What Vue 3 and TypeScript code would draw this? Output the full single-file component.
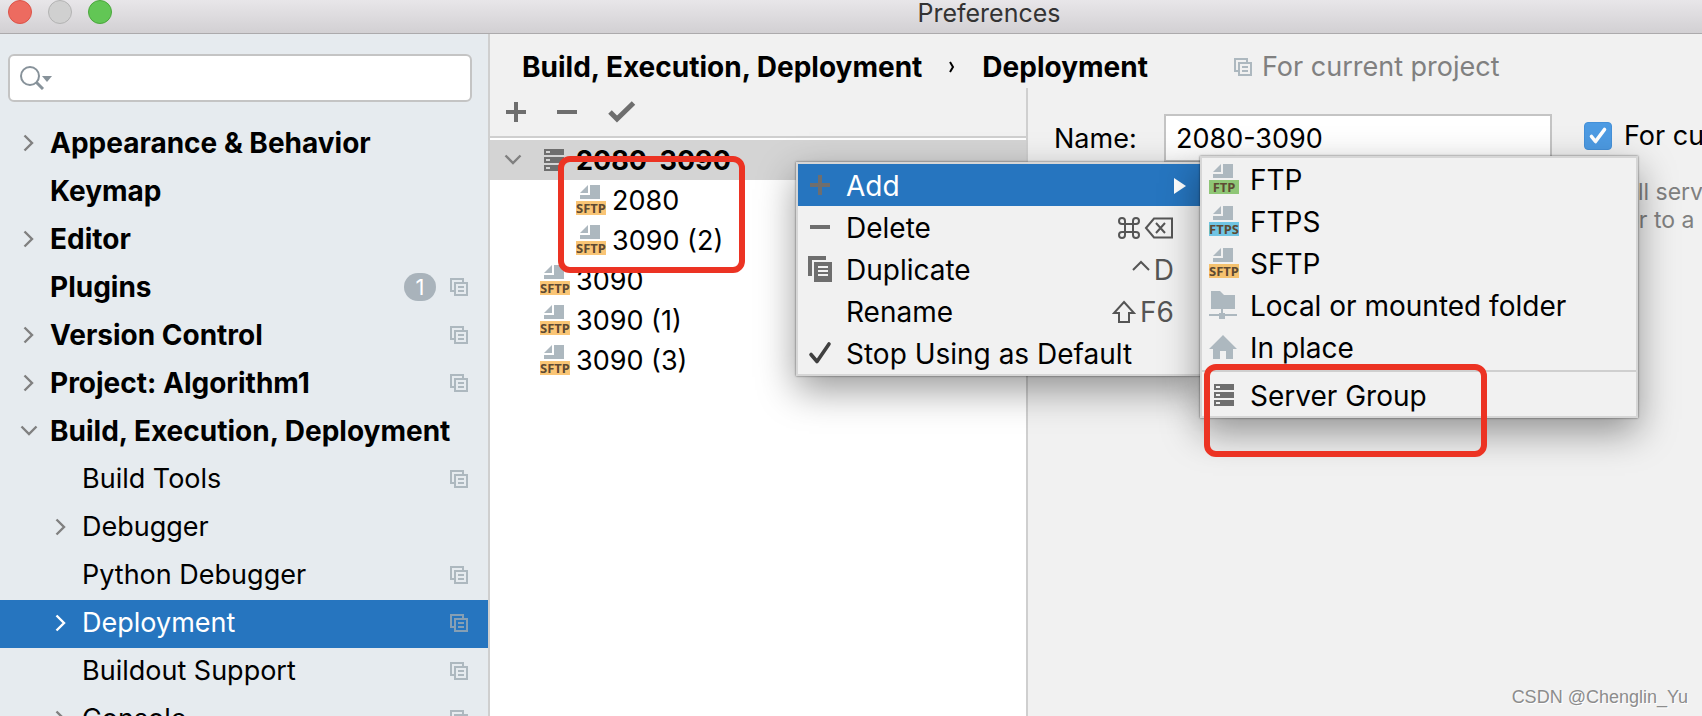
<script setup lang="ts">
import { ref } from 'vue'

interface NavItem {
  label: string
  level: 1 | 2
  arrow?: 'right' | 'down'
  badge?: string
  project?: boolean
  active?: boolean
}

interface ServerItem {
  label: string
  kind: 'group' | 'sftp'
  nested?: boolean
}

interface MenuItem {
  label: string
  icon?: 'plus' | 'minus' | 'copy' | 'tick'
  keys?: string
  keyIcons?: ('cmd' | 'erase' | 'ctrl' | 'shift')[]
  active?: boolean
}

const navItems: NavItem[] = [
  { label: 'Appearance & Behavior', level: 1, arrow: 'right' },
  { label: 'Keymap', level: 1 },
  { label: 'Editor', level: 1, arrow: 'right' },
  { label: 'Plugins', level: 1, badge: '1', project: true },
  { label: 'Version Control', level: 1, arrow: 'right', project: true },
  { label: 'Project: Algorithm1', level: 1, arrow: 'right', project: true },
  { label: 'Build, Execution, Deployment', level: 1, arrow: 'down' },
  { label: 'Build Tools', level: 2, project: true },
  { label: 'Debugger', level: 2, arrow: 'right' },
  { label: 'Python Debugger', level: 2, project: true },
  { label: 'Deployment', level: 2, arrow: 'right', project: true, active: true },
  { label: 'Buildout Support', level: 2, project: true },
  { label: 'Console', level: 2, arrow: 'right', project: true },
]

const servers: ServerItem[] = [
  { label: '2080-3090', kind: 'group' },
  { label: '2080', kind: 'sftp', nested: true },
  { label: '3090 (2)', kind: 'sftp', nested: true },
  { label: '3090', kind: 'sftp' },
  { label: '3090 (1)', kind: 'sftp' },
  { label: '3090 (3)', kind: 'sftp' },
]

const menuItems: MenuItem[] = [
  { label: 'Add', icon: 'plus', active: true },
  { label: 'Delete', icon: 'minus', keyIcons: ['cmd', 'erase'] },
  { label: 'Duplicate', icon: 'copy', keyIcons: ['ctrl'], keys: 'D' },
  { label: 'Rename', keyIcons: ['shift'], keys: 'F6' },
  { label: 'Stop Using as Default', icon: 'tick' },
]

const protocols = [
  { label: 'FTP', color: '#8fc676' },
  { label: 'FTPS', color: '#70c4e3' },
  { label: 'SFTP', color: '#f5c26f' },
]

const search = ref('')
const serverName = ref('2080-3090')
const currentOnly = ref(true)
</script>

<template>
  <div class="window">
    <svg class="defs" aria-hidden="true">
      <symbol id="project" viewBox="0 0 18 18">
        <path d="M1 13V1h12v3M1 12v1h3" fill="none" stroke="currentColor" stroke-width="2" />
        <path d="M5 5h12v12H5zM8 9h6M8 13h6" fill="none" stroke="currentColor" stroke-width="2" />
      </symbol>
      <symbol id="arrow" viewBox="0 0 12 18">
        <path d="M1.5 1.500l7.500 7.500-7.500 7.500" fill="none" stroke="currentColor" stroke-width="2.400" />
      </symbol>
      <symbol id="group" viewBox="0 0 20 22">
        <path
          fill="currentColor"
          fill-rule="evenodd"
          d="M0 0h20v6H0zM2 2v2h4V2zM0 8h20v6H0zM2 10v2h4v-2zM0 16h20v6H0zM2 18v2h4v-2z"
        />
      </symbol>
      <symbol id="plus" viewBox="0 0 20 20">
        <path fill="currentColor" d="M8 0h4v8h8v4h-8v8H8v-8H0V8h8z" />
      </symbol>
      <symbol id="minus" viewBox="0 0 20 20">
        <path fill="currentColor" d="M0 8h20v4H0z" />
      </symbol>
    </svg>

    <header class="titlebar">
      <div class="lights">
        <button type="button" class="light red" aria-label="Close"></button>
        <button type="button" class="light grey" aria-label="Minimize"></button>
        <button type="button" class="light green" aria-label="Zoom"></button>
      </div>
      <h1>Preferences</h1>
    </header>

    <div class="body">
      <aside class="sidebar">
        <label class="search">
          <svg width="32" height="24" viewBox="0 0 32 24" aria-hidden="true">
            <circle cx="10" cy="10" r="9" fill="none" stroke="#87929a" stroke-width="2" />
            <path d="M16 16l7 7" stroke="#87929a" stroke-width="3" />
            <path d="M22 10h10l-5 6z" fill="#87929a" />
          </svg>
          <input v-model="search" type="text" aria-label="Search settings" />
        </label>
        <nav>
          <a
            v-for="item in navItems"
            :key="item.label"
            href="#"
            class="nav-row"
            :class="{ deep: item.level === 2, active: item.active }"
          >
            <span class="twisty">
              <svg v-if="item.arrow" :class="item.arrow" width="12" height="18" aria-hidden="true"><use href="#arrow" /></svg>
            </span>
            <span class="nav-label">{{ item.label }}</span>
            <span v-if="item.badge" class="badge">{{ item.badge }}</span>
            <svg v-if="item.project" class="project" width="18" height="18" aria-hidden="true"><use href="#project" /></svg>
          </a>
        </nav>
      </aside>

      <main class="content">
        <div class="crumbs">
          <span>Build, Execution, Deployment</span>
          <svg width="8" height="12" viewBox="0 0 8 12" aria-hidden="true">
            <path d="M2 1l3 5-3 5" fill="none" stroke="#000" stroke-width="2" />
          </svg>
          <span>Deployment</span>
          <span class="scope">
            <svg class="project" width="18" height="18" aria-hidden="true"><use href="#project" /></svg>
            For current project
          </span>
        </div>

        <div class="panes">
          <section class="list-pane">
            <div class="toolbar">
              <button type="button" aria-label="Add server"><svg width="20" height="20"><use href="#plus" /></svg></button>
              <button type="button" aria-label="Remove server"><svg width="20" height="20"><use href="#minus" /></svg></button>
              <button type="button" aria-label="Use as default">
                <svg width="28" height="22" viewBox="0 0 28 22">
                  <path d="M2 11l7 7L25.500 2" fill="none" stroke="currentColor" stroke-width="5" />
                </svg>
              </button>
            </div>
            <ul class="servers">
              <li
                v-for="server in servers"
                :key="server.label"
                :class="[server.kind, { nested: server.nested }]"
              >
                <template v-if="server.kind === 'group'">
                  <svg class="down" width="12" height="18" aria-hidden="true"><use href="#arrow" /></svg>
                  <svg class="group-icon" width="20" height="22" aria-hidden="true"><use href="#group" /></svg>
                </template>
                <svg v-else width="30" height="30" viewBox="0 0 30 30">
                  <path d="M4 8l8-8v8zM14 0h10v14H4v-4h10z" fill="#adb8bf" />
                  <path d="M0 16h30v14H0z" fill="#f9c575" />
                  <text class="tag" x="15" y="28">SFTP</text>
                </svg>
                <span class="server-label">{{ server.label }}</span>
              </li>
            </ul>
          </section>

          <section class="form-pane">
            <div class="name-row">
              <label for="server-name">Name:</label>
              <input id="server-name" v-model="serverName" type="text" />
              <label class="check">
                <span class="box">
                  <input v-model="currentOnly" type="checkbox" />
                  <svg width="28" height="28" viewBox="0 0 28 28" aria-hidden="true">
                    <path d="M7.500 14.500l4 5 9-12" fill="none" stroke="#fff" stroke-width="3.600" stroke-linecap="round" stroke-linejoin="round" />
                  </svg>
                </span>
                For current project
              </label>
            </div>
            <p class="hint">all servers<br />or to a</p>
          </section>
        </div>
      </main>
    </div>

    <div class="menu context" role="menu">
      <button
        v-for="item in menuItems"
        :key="item.label"
        type="button"
        role="menuitem"
        class="menu-row"
        :class="{ active: item.active }"
      >
        <span class="menu-icon">
          <svg v-if="item.icon === 'plus'" width="20" height="20"><use href="#plus" /></svg>
          <svg v-else-if="item.icon === 'minus'" width="20" height="20"><use href="#minus" /></svg>
          <svg v-else-if="item.icon === 'copy'" width="24" height="26" viewBox="0 0 24 26">
            <path fill="currentColor" fill-rule="evenodd" d="M0 0h18v4H4v16H0zM6 6h18v20H6zM10 10v2h10v-2zM10 14v2h10v-2zM10 18v2h10v-2z" />
          </svg>
          <svg v-else-if="item.icon === 'tick'" width="24" height="24" viewBox="0 0 24 24">
            <path d="M3 13.500l6 7L21 3" fill="none" stroke="#404040" stroke-width="3.600" stroke-linecap="round" stroke-linejoin="round" />
          </svg>
        </span>
        <span class="menu-label">{{ item.label }}</span>
        <svg v-if="item.active" width="12" height="16" viewBox="0 0 12 16"><path d="M0 0l12 8-12 8z" fill="#fff" /></svg>
        <span v-else class="keys">
          <template v-for="k in item.keyIcons" :key="k">
            <svg v-if="k === 'cmd'" width="22" height="22" viewBox="0 0 22 22">
              <path d="M7 7h8v8H7zM7 7V4a3 3 0 1 0-3 3zM15 7h3a3 3 0 1 0-3-3zM15 15v3a3 3 0 1 0 3-3zM7 15H4a3 3 0 1 0 3 3z" fill="none" stroke="currentColor" stroke-width="2" />
            </svg>
            <svg v-else-if="k === 'erase'" width="30" height="22" viewBox="0 0 30 22">
              <path d="M2 11L10 1.500h18v19H10zM12 6l9 10M21 6l-9 10" fill="none" stroke="currentColor" stroke-width="2" />
            </svg>
            <svg v-else-if="k === 'ctrl'" width="18" height="22" viewBox="0 0 18 22">
              <path d="M1 11l8-8 8 8" fill="none" stroke="currentColor" stroke-width="2" />
            </svg>
            <svg v-else width="24" height="24" viewBox="0 0 24 24">
              <path d="M12 2l10 11h-5v9H7v-9H2z" fill="none" stroke="currentColor" stroke-width="2" />
            </svg>
          </template>
          <span v-if="item.keys">{{ item.keys }}</span>
        </span>
      </button>
    </div>

    <div class="menu submenu" role="menu">
      <button v-for="p in protocols" :key="p.label" type="button" role="menuitem" class="menu-row">
        <span class="menu-icon">
          <svg width="30" height="30" viewBox="0 0 30 30">
            <path d="M4 8l8-8v8zM14 0h10v14H4v-4h10z" fill="#adb8bf" />
            <path d="M0 16h30v14H0z" :fill="p.color" />
            <text class="tag" x="15" y="28">{{ p.label }}</text>
          </svg>
        </span>
        <span class="menu-label">{{ p.label }}</span>
      </button>
      <button type="button" role="menuitem" class="menu-row">
        <span class="menu-icon">
          <svg width="30" height="30" viewBox="0 0 30 30">
            <path d="M2 1h9l4 4h11v14h-12v4h2v1h12v2H16v3h-6v-3H0v-2h10v-1h2v-4H2z" fill="#adb8bf" />
          </svg>
        </span>
        <span class="menu-label">Local or mounted folder</span>
      </button>
      <button type="button" role="menuitem" class="menu-row">
        <span class="menu-icon">
          <svg width="30" height="26" viewBox="0 0 30 26">
            <path d="M14 1l14 14h-4v10h-7v-8h-6v8H4V15H0z" fill="#adb8bf" />
          </svg>
        </span>
        <span class="menu-label">In place</span>
      </button>
      <hr />
      <button type="button" role="menuitem" class="menu-row">
        <span class="menu-icon"><svg width="20" height="22"><use href="#group" /></svg></span>
        <span class="menu-label">Server Group</span>
      </button>
    </div>

    <div class="mark mark-servers"></div>
    <div class="mark mark-group"></div>
    <div class="watermark">CSDN @Chenglin_Yu</div>
  </div>
</template>

<style>
body {
  margin: 0;
}
</style>

<style scoped>
.window {
  position: relative;
  display: flex;
  flex-direction: column;
  height: 100vh;
  overflow: hidden;
  background: #f1f1f1;
  color: #000;
  font-family: Inter, "Liberation Sans", sans-serif;
  font-size: 27px;
  line-height: 32px;
}

.window *,
.window *::before {
  box-sizing: border-box;
}

.defs {
  position: absolute;
  width: 0;
  height: 0;
}

svg {
  display: block;
  flex: none;
}

button,
input {
  margin: 0;
  padding: 0;
  border: 0;
  background: none;
  color: inherit;
  font: inherit;
  outline: none;
}

.titlebar {
  display: flex;
  flex: none;
  align-items: flex-start;
  height: 34px;
  border-bottom: 1px solid #acaaac;
  background: linear-gradient(#e8e6e9, #d2d0d3);
}

.lights {
  display: flex;
  flex: none;
  gap: 16px;
  width: 276px;
  padding-left: 8px;
}

.light {
  width: 24px;
  height: 24px;
  border: 1px solid;
  border-radius: 50%;
}

.red {
  border-color: #dc5348;
  background: #ed6b60;
}

.grey {
  border-color: #b3b3b3;
  background: #d0d0d0;
}

.green {
  border-color: #4aa73c;
  background: #62c655;
}

h1 {
  flex: 1;
  margin: 0;
  color: #333;
  font-size: 25px;
  font-weight: 400;
  line-height: 26px;
  text-align: center;
}

.body {
  display: flex;
  flex: 1;
  min-height: 0;
}

.sidebar {
  flex: none;
  width: 490px;
  padding-top: 20px;
  overflow: hidden;
  border-right: 2px solid #cfcfcf;
  background: #e6ebef;
}

.search {
  display: flex;
  align-items: center;
  height: 48px;
  margin: 0 16px 18px 8px;
  padding-left: 10px;
  border: 2px solid #c4c4c4;
  border-radius: 6px;
  background: #fff;
}

.search input {
  flex: 1;
  min-width: 0;
  padding: 0 8px;
}

.nav-row {
  display: flex;
  align-items: center;
  height: 48px;
  padding: 0 20px 2px 14px;
  color: inherit;
  font-size: 28px;
  font-weight: 700;
  text-decoration: none;
  white-space: nowrap;
}

.deep {
  padding-left: 46px;
  font-size: 27px;
  font-weight: 400;
}

.active {
  background: #2675bf;
  color: #fff;
}

.twisty {
  display: flex;
  flex: none;
  justify-content: center;
  width: 30px;
  margin-right: 6px;
  color: #808080;
}

.active .twisty {
  color: #fff;
}

.down {
  transform: rotate(90deg);
}

.nav-label {
  flex: 1;
}

.badge {
  width: 32px;
  height: 28px;
  margin-right: 14px;
  border-radius: 14px;
  background: #a9b3bb;
  color: #fff;
  font-size: 22px;
  font-weight: 400;
  line-height: 28px;
  text-align: center;
}

.project {
  color: #adb8bf;
}

.active .project {
  color: #869fb4;
}

.content {
  display: flex;
  flex: 1;
  flex-direction: column;
  min-width: 0;
}

.crumbs {
  display: flex;
  flex: none;
  align-items: center;
  gap: 26px;
  height: 54px;
  padding: 12px 0 0 32px;
  font-size: 28px;
  font-weight: 700;
  white-space: nowrap;
}

.scope {
  display: flex;
  align-items: center;
  gap: 10px;
  margin-left: 60px;
  color: #808080;
  font-size: 27px;
  font-weight: 400;
}

.panes {
  display: flex;
  flex: 1;
  min-height: 0;
}

.list-pane {
  display: flex;
  flex: none;
  flex-direction: column;
  width: 538px;
  border-right: 2px solid #cfcfcf;
}

.toolbar {
  display: flex;
  flex: none;
  align-items: center;
  gap: 31px;
  height: 50px;
  padding-left: 16px;
  border-bottom: 2px solid #cfcfcf;
  color: #6e6e6e;
}

.servers {
  flex: 1;
  margin: 0;
  padding: 2px 0 0;
  background: #fff;
  list-style: none;
}

.servers li {
  display: flex;
  align-items: center;
  gap: 6px;
  height: 40px;
  padding-left: 50px;
  white-space: nowrap;
}

.servers .nested {
  padding-left: 86px;
}

.servers .group {
  gap: 12px;
  padding-left: 17px;
  background: #d4d4d4;
  color: #000;
  font-weight: 700;
}

.server-label {
  padding-top: 2px;
}

.group .down {
  color: #808080;
}

.group-icon {
  margin-left: 13px;
  color: #6e6e6e;
}

.tag {
  fill: #5d4a33;
  font-family: "Noto Sans", "Open Sans", sans-serif;
  font-size: 13px;
  font-weight: 700;
  text-anchor: middle;
}

.form-pane {
  flex: 1;
  min-width: 0;
  padding: 26px 0 0 26px;
  overflow: hidden;
}

.name-row {
  display: flex;
  align-items: center;
  white-space: nowrap;
}

.name-row > label:first-child {
  flex: none;
  width: 110px;
  padding-top: 2px;
}

#server-name {
  flex: none;
  width: 388px;
  height: 48px;
  padding: 0 10px;
  border: 2px solid #c4c4c4;
  background: #fff;
}

.check {
  display: flex;
  align-items: center;
  gap: 12px;
  margin-left: 32px;
  padding-bottom: 4px;
}

.box {
  display: grid;
  flex: none;
}

.box > * {
  grid-area: 1 / 1;
}

.box input {
  width: 28px;
  height: 28px;
  appearance: none;
  border: 1px solid #4490d8;
  border-radius: 4px;
  background: #4d9be3;
}

.hint {
  margin: 16px 0 0 571px;
  color: #808080;
  font-size: 23px;
  line-height: 28px;
  white-space: nowrap;
}

.menu {
  position: absolute;
  border: 2px solid #d6d6d6;
  background: #f1f1f1;
  font-size: 28px;
  box-shadow:
    0 0 2px rgba(0, 0, 0, 0.6),
    0 14px 36px rgba(0, 0, 0, 0.4);
}

.context {
  top: 162px;
  left: 796px;
  width: 408px;
}

.submenu {
  top: 156px;
  left: 1200px;
  width: 438px;
}

.menu-row {
  display: flex;
  align-items: center;
  width: 100%;
  height: 42px;
  padding: 1px 18px 0 6px;
  text-align: left;
  white-space: nowrap;
}

.menu-icon {
  display: flex;
  flex: none;
  justify-content: center;
  width: 32px;
  margin-right: 10px;
  padding-bottom: 2px;
  color: #6e6e6e;
}

.context .menu-row {
  padding-right: 28px;
}

.context .menu-row.active {
  padding-right: 16px;
}

.menu-label {
  flex: 1;
}

.keys {
  display: flex;
  align-items: center;
  gap: 4px;
  color: #555;
}

hr {
  height: 6px;
  margin: 0;
  border: 0;
  border-top: 2px solid #f1f1f1;
  border-bottom: 2px solid #f1f1f1;
  background: #cfcfcf;
}

.mark {
  position: absolute;
  border: 6px solid #ec3323;
  border-radius: 12px;
}

.mark-servers {
  top: 156px;
  left: 558px;
  width: 187px;
  height: 117px;
}

.mark-group {
  top: 364px;
  left: 1204px;
  width: 283px;
  height: 93px;
}

.watermark {
  position: absolute;
  right: 14px;
  bottom: 7px;
  color: #8c8c8c;
  font-family: "Liberation Sans", sans-serif;
  font-size: 18px;
  line-height: 24px;
  text-shadow: 1px 1px 0 #fff;
}
</style>
